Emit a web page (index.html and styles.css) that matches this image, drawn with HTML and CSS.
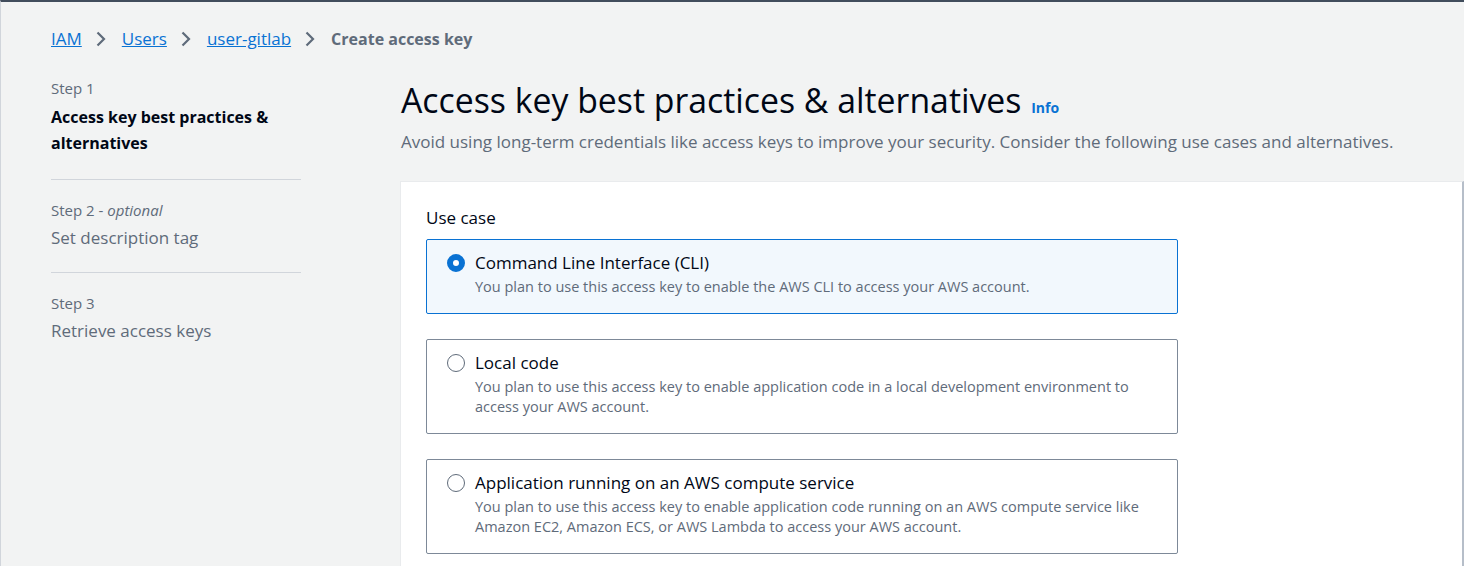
FILE: index.html
```html
<!DOCTYPE html>
<html lang="en">
<head>
<meta charset="utf-8">
<title>Create access key</title>
<link rel="stylesheet" href="styles.css">
</head>
<body>
<div class="page">
  <nav class="breadcrumbs">
    <a href="#" class="crumb-link">IAM</a>
    <span class="chev"><svg width="14" height="16" viewBox="0 0 14 16"><path d="M3.5 1.5 10 8l-6.5 6.5" fill="none" stroke="currentColor" stroke-width="2.2"/></svg></span>
    <a href="#" class="crumb-link">Users</a>
    <span class="chev"><svg width="14" height="16" viewBox="0 0 14 16"><path d="M3.5 1.5 10 8l-6.5 6.5" fill="none" stroke="currentColor" stroke-width="2.2"/></svg></span>
    <a href="#" class="crumb-link">user-gitlab</a>
    <span class="chev"><svg width="14" height="16" viewBox="0 0 14 16"><path d="M3.5 1.5 10 8l-6.5 6.5" fill="none" stroke="currentColor" stroke-width="2.2"/></svg></span>
    <span class="crumb-current">Create access key</span>
  </nav>
  <div class="layout">
    <ol class="steps">
      <li class="step">
        <div class="step-num">Step 1</div>
        <div class="step-title active">Access key best practices &amp; alternatives</div>
      </li>
      <li class="step">
        <div class="step-num">Step 2 - <i>optional</i></div>
        <div class="step-title">Set description tag</div>
      </li>
      <li class="step">
        <div class="step-num">Step 3</div>
        <div class="step-title">Retrieve access keys</div>
      </li>
    </ol>
    <main class="main">
      <header class="header">
        <h1 class="title">Access key best practices &amp; alternatives <a href="#" class="info">Info</a></h1>
        <p class="desc">Avoid using long-term credentials like access keys to improve your security. Consider the following use cases and alternatives.</p>
      </header>
      <section class="card">
        <div class="label">Use case</div>
        <div class="tiles">
          <label class="tile selected">
            <span class="radio on"></span>
            <span class="tile-text">
              <span class="tile-title">Command Line Interface (CLI)</span>
              <span class="tile-desc">You plan to use this access key to enable the AWS CLI to access your AWS account.</span>
            </span>
          </label>
          <label class="tile">
            <span class="radio"></span>
            <span class="tile-text">
              <span class="tile-title">Local code</span>
              <span class="tile-desc">You plan to use this access key to enable application code in a local development environment to access your AWS account.</span>
            </span>
          </label>
          <label class="tile">
            <span class="radio"></span>
            <span class="tile-text">
              <span class="tile-title">Application running on an AWS compute service</span>
              <span class="tile-desc">You plan to use this access key to enable application code running on an AWS compute service like Amazon EC2, Amazon ECS, or AWS Lambda to access your AWS account.</span>
            </span>
          </label>
        </div>
      </section>
    </main>
  </div>
</div>
</body>
</html>
```
FILE: styles.css
```css
* { box-sizing: border-box; }
html, body { margin: 0; padding: 0; }
body {
  background: #f2f3f3;
  font-family: "Open Sans", "Noto Sans", sans-serif;
  color: #000716;
  height: 566px;
  overflow: hidden;
}
.page {
  border-top: 2px solid #414d5c;
  border-left: 1px solid #d1d5db;
  height: 566px;
  padding: 26px 0 0 50px;
  display: flex;
  flex-direction: column;
}
.breadcrumbs {
  display: flex;
  align-items: center;
  font-size: 17px;
  line-height: 22px;
  height: 22px;
}
.crumb-link { color: #0972d3; text-decoration: underline; }
.crumb-current { color: #5f6b7a; font-weight: 700; font-size: 16px; }
.chev { color: #5f6b7a; display: flex; margin: 0 14px 0 12px; }
.layout {
  display: flex;
  margin-top: 28px;
  flex: 1;
}
.steps {
  list-style: none;
  margin: 0;
  padding: 0;
  width: 250px;
  flex: none;
}
.step { padding: 20px 0 21px; border-bottom: 1px solid #d1d5db; }
.step:first-child { padding-top: 0; padding-bottom: 23px; }
.step:last-child { border-bottom: none; }
.step-num { font-size: 15px; line-height: 20px; color: #5f6b7a; margin-bottom: 5px; }
.step:first-child .step-num { margin-bottom: 6px; }
.step-title { font-size: 17px; line-height: 26px; color: #5f6b7a; }
.step-title.active { color: #000716; font-weight: 700; font-size: 16px; }
.main { margin-left: 99px; flex: 1; display: flex; flex-direction: column; }
.header { padding: 0 0 28px 1px; }
.title {
  margin: 0;
  font-size: 33.8px;
  font-weight: 400;
  line-height: 44px;
}
.info { font-size: 14px; line-height: 1; font-weight: 700; color: #0972d3; text-decoration: none; margin-left: 1px; }
.desc { margin: 9px 0 0; font-size: 17px; line-height: 22px; color: #5f6b7a; }
.card {
  background: #fff;
  border-top: 1px solid #e9ebed;
  border-left: 1px solid #e9ebed;
  border-right: 2px solid #b6bec9;
  padding: 25px 25px 12px 25px;
  flex: 1;
}
.label { font-size: 17px; line-height: 22px; color: #000716; margin-bottom: 10px; }
.tiles { display: flex; flex-direction: column; gap: 25px; width: 752px; }
.tile {
  display: flex;
  align-items: flex-start;
  border: 1px solid #7d8998;
  border-radius: 2px;
  padding: 12px 20px 15px 20px;
}
.tile.selected { background: #f2f8fd; border-color: #0972d3; }
.radio {
  flex: none;
  width: 18px;
  height: 18px;
  border-radius: 50%;
  border: 1.5px solid #5f6b7a;
  margin: 2px 10px 0 0;
  background: #fff;
}
.radio.on { border: 6px solid #0972d3; }
.tile-text { display: flex; flex-direction: column; }
.tile-title { font-size: 17px; line-height: 22px; color: #000716; }
.tile-desc { font-size: 14.5px; line-height: 20.5px; color: #5f6b7a; margin-top: 3px; }
```
